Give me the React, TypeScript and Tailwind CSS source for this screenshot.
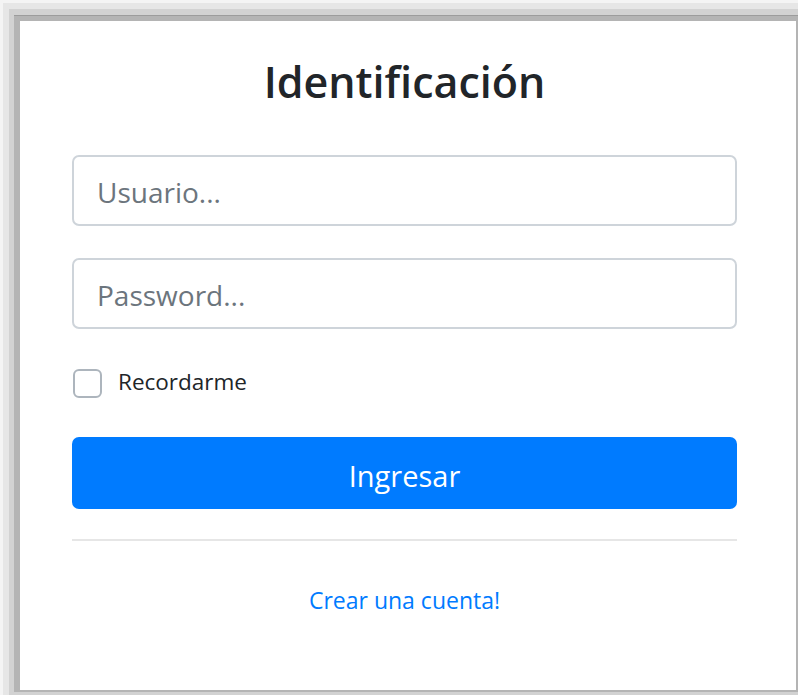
export default function App() {
  return (
    <div className="w-[798px] h-[695px] overflow-hidden bg-[#f4f4f4] pl-[3px] pt-[3px]" style={{ fontFamily: '"Open Sans", "Noto Sans", sans-serif' }}>
      {/* layered frame edges around the card */}
      <div className="h-full bg-[#e6e6e6] pl-[6px] pt-[6px]">
        <div className="h-full bg-[#d2d2d2] pl-[5px] pt-[6px] pb-[3px]">
          <div className="h-full bg-[#b4b4b4] pl-[6px] pt-[5px] pr-[2px] pb-[2px] border-t border-[#9c9c9c]">
            <div className="h-full bg-white pl-[52px] pt-[35px]">
              <div className="w-[665px] flex flex-col">
                <h1 className="text-center text-[43px] leading-[52px] font-semibold text-[#212529]">
                  Identificación
                </h1>

                <input
                  type="text"
                  placeholder="Usuario..."
                  className="mt-[47px] h-[71px] w-full rounded-[7px] border-2 border-[#ced4da] px-[23px] pt-[3px] text-[28px] text-[#495057] placeholder:text-[#6c757d] outline-none"
                />
                <input
                  type="password"
                  placeholder="Password..."
                  className="mt-[32px] h-[71px] w-full rounded-[7px] border-2 border-[#ced4da] px-[23px] pt-[3px] text-[28px] text-[#495057] placeholder:text-[#6c757d] outline-none"
                />

                <label className="mt-[40px] flex items-center gap-[16px] text-[22.5px] leading-[29px] text-[#212529]">
                  <span className="ml-[1px] h-[29px] w-[29px] rounded-[6px] border-2 border-[#adb5bd] bg-white" />
                  <span className="-mt-[4px]">Recordarme</span>
                </label>

                <button className="mt-[39px] h-[72px] w-full rounded-[7px] bg-[#007bff] pt-[5px] text-[29px] text-white">
                  Ingresar
                </button>

                <div className="mt-[30px] h-[2px] w-full bg-[#e6e6e6]" />

                <a className="mt-[44px] self-center text-[23px] leading-[30px] text-[#007bff]">
                  Crear una cuenta!
                </a>
              </div>
            </div>
          </div>
        </div>
      </div>
    </div>
  );
}
